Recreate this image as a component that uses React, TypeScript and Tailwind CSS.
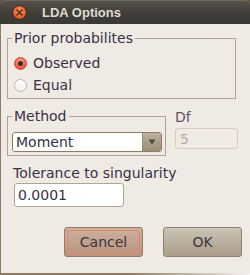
export default function App() {
  return (
    <div className="w-[250px] h-[275px] overflow-hidden flex flex-col bg-[#5e5546] font-['DejaVu_Sans',sans-serif] text-[14px] leading-[16px] text-[#3a3044]">
      {/* Title bar */}
      <div className="h-[24px] shrink-0 flex items-center rounded-t-[5px] border-t border-[#6f6553] bg-gradient-to-b from-[#56524a] via-[#423f3a] to-[#3a3935]">
        <div className="ml-[12px] w-[15px] h-[15px] rounded-full border border-[#3a2418] bg-[radial-gradient(circle_at_50%_40%,#f89a68,#e0602f_60%,#b8401c)] flex items-center justify-center">
          <svg width="7" height="7" viewBox="0 0 7 7">
            <path d="M1 1 L6 6 M6 1 L1 6" stroke="#5a2a16" strokeWidth="1.6" strokeLinecap="round" />
          </svg>
        </div>
        <div className="ml-[15px] font-['Liberation_Sans',sans-serif] font-bold text-[13px] leading-[16px] text-[#dfdbd2]">
          LDA Options
        </div>
      </div>

      {/* Body */}
      <div className="flex-1 flex flex-col bg-[#efebe4] border-l border-[#8c7c62] pl-[6px]">
        {/* Prior probabilities */}
        <fieldset className="mt-[6px] w-[229px] border border-[#aaa497] pl-[4px] pb-[2px]">
          <legend className="px-[2px] leading-[16px]">Prior probabilites</legend>
          <div className="pt-[6px] flex flex-col">
            <div className="h-[22px] flex items-center">
              <div className="ml-[2px] w-[13px] h-[13px] rounded-full border border-[#c24a30] bg-[radial-gradient(circle_at_50%_35%,#fca58a,#ef5f40_65%,#d8462c)] flex items-center justify-center">
                <div className="w-[5px] h-[5px] rounded-full bg-[#3a2a2a]" />
              </div>
              <span className="ml-[6px]">Observed</span>
            </div>
            <div className="h-[22px] flex items-center">
              <div className="ml-[2px] w-[13px] h-[13px] rounded-full border border-[#bdb5a7] bg-gradient-to-b from-[#ffffff] to-[#f3f0ea]" />
              <span className="ml-[6px]">Equal</span>
            </div>
          </div>
        </fieldset>

        {/* Method + Df */}
        <div className="mt-[9px] flex items-start">
          <fieldset className="w-[159px] border border-[#aaa497] pl-[4px] pb-[3px]">
            <legend className="px-[2px] leading-[16px]">Method</legend>
            <div className="mt-[8px] w-[150px] h-[20px] flex rounded-[3px] border border-[#8c7e66] overflow-hidden">
              <div className="flex-1 bg-white pl-[3px] flex items-center leading-[16px]">Moment</div>
              <div className="w-[19px] border-l border-[#9a8d78] bg-gradient-to-b from-[#bdb2a0] to-[#9b8e79] flex items-center justify-center">
                <svg width="8" height="6" viewBox="0 0 8 6">
                  <path d="M0.5 0.5 L7.5 0.5 L4 5.5 Z" fill="#4d4842" />
                </svg>
              </div>
            </div>
          </fieldset>
          <div className="ml-[9px] mt-[1px] flex flex-col">
            <div className="leading-[16px] text-[#5e5468]">Df</div>
            <div className="mt-[3px] w-[63px] h-[21px] rounded-[3px] border border-[#d5ccbc] bg-[#efebe4] pl-[4px] flex items-center text-[#b6ae9f]">
              5
            </div>
          </div>
        </div>

        {/* Tolerance */}
        <div className="mt-[9px] ml-[6px] leading-[16px]">Tolerance to singularity</div>
        <div className="mt-[2px] ml-[7px] w-[110px] h-[24px] rounded-[3px] border border-[#b0a692] bg-white pl-[3px] flex items-center">
          0.0001
        </div>

        {/* Buttons */}
        <div className="mt-[20px] ml-[57px] flex gap-[20px]">
          <div className="w-[79px] h-[30px] rounded-[3px] border border-[#8d7d6a] bg-gradient-to-b from-[#cdb09e] to-[#b8937e] p-[2px]">
            <div className="w-full h-full rounded-[2px] border border-[#e8846c] flex items-center justify-center text-[#3c3640]">
              Cancel
            </div>
          </div>
          <div className="w-[79px] h-[30px] rounded-[3px] border border-[#8f836f] bg-gradient-to-b from-[#cbc3b5] to-[#a99d89] flex items-center justify-center text-[#3c3640]">
            OK
          </div>
        </div>
      </div>
      <div className="h-[2px] shrink-0 bg-gradient-to-r from-[#8c7c62] via-[#8c7c62] to-[#f5f2ee]" />
    </div>
  );
}
